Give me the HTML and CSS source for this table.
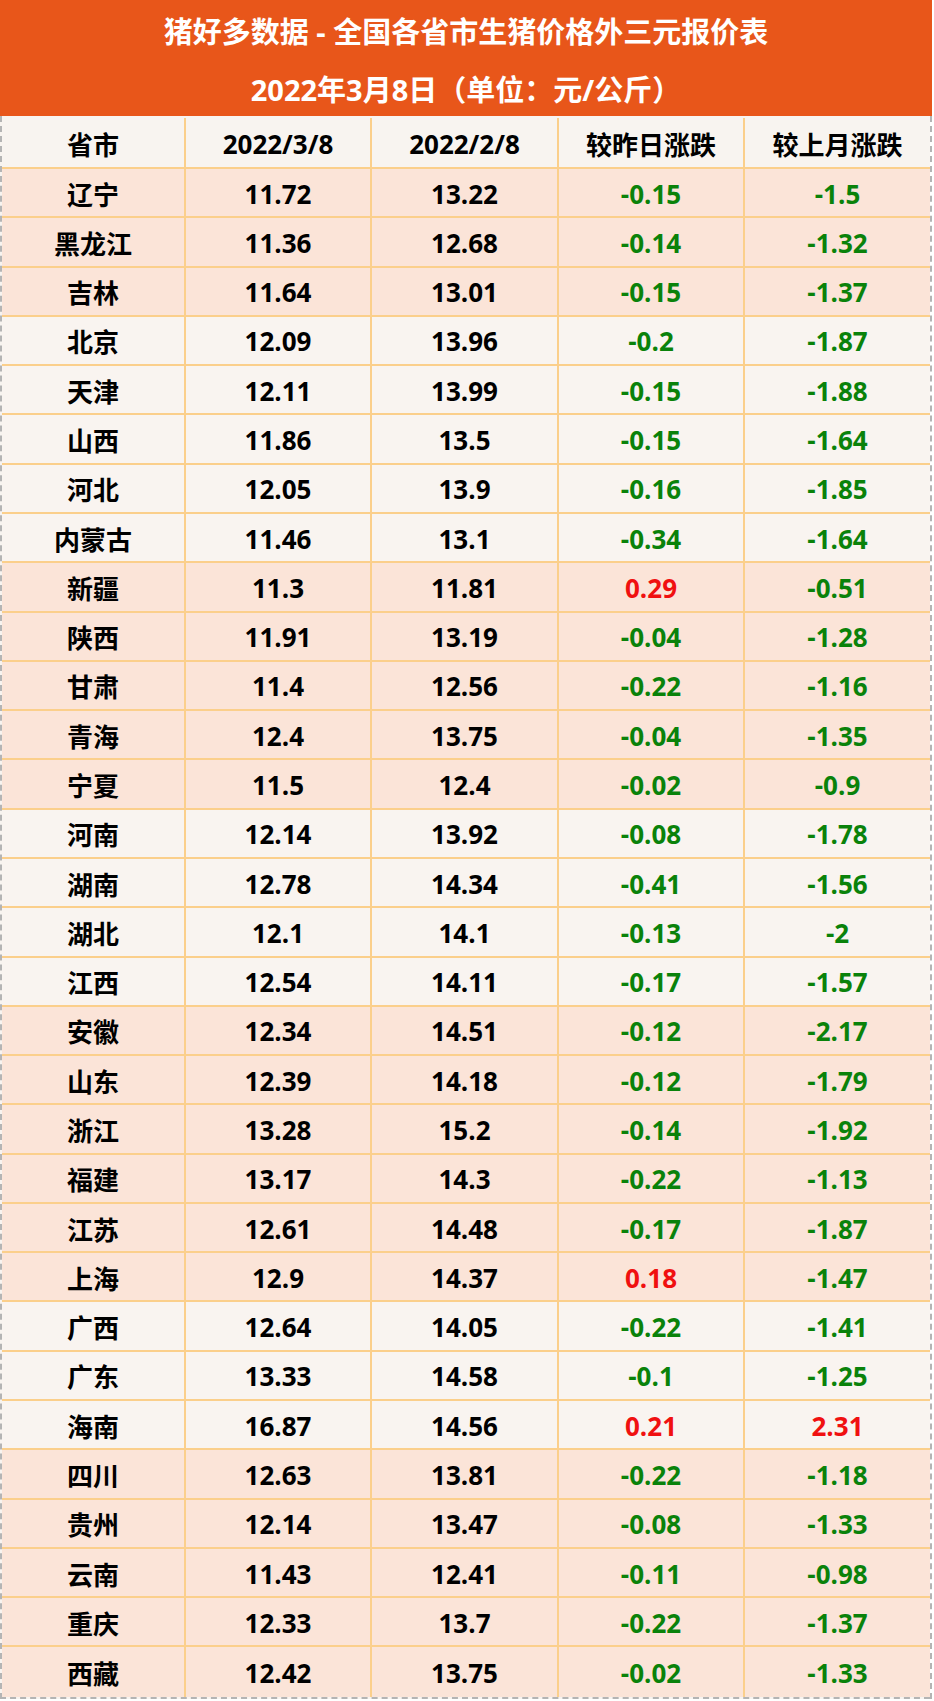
FILE: index.html
```html
<!DOCTYPE html>
<html lang="zh-CN">
<head>
<meta charset="utf-8">
<title>猪好多数据 - 全国各省市生猪价格外三元报价表</title>
<link rel="stylesheet" href="styles.css">
</head>
<body>
<div class="sheet">
  <div class="banner">
    <div class="banner-line first">猪好多数据 - 全国各省市生猪价格外三元报价表</div>
    <div class="banner-line">2022年3月8日（单位：元/公斤）</div>
  </div>
  <div class="grid">
    <div class="row head"><div class="cell">省市</div><div class="cell">2022/3/8</div><div class="cell">2022/2/8</div><div class="cell">较昨日涨跌</div><div class="cell">较上月涨跌</div></div>
    <div class="row pink"><div class="cell">辽宁</div><div class="cell">11.72</div><div class="cell">13.22</div><div class="cell down">-0.15</div><div class="cell down">-1.5</div></div>
    <div class="row pink"><div class="cell">黑龙江</div><div class="cell">11.36</div><div class="cell">12.68</div><div class="cell down">-0.14</div><div class="cell down">-1.32</div></div>
    <div class="row pink"><div class="cell">吉林</div><div class="cell">11.64</div><div class="cell">13.01</div><div class="cell down">-0.15</div><div class="cell down">-1.37</div></div>
    <div class="row light"><div class="cell">北京</div><div class="cell">12.09</div><div class="cell">13.96</div><div class="cell down">-0.2</div><div class="cell down">-1.87</div></div>
    <div class="row light"><div class="cell">天津</div><div class="cell">12.11</div><div class="cell">13.99</div><div class="cell down">-0.15</div><div class="cell down">-1.88</div></div>
    <div class="row light"><div class="cell">山西</div><div class="cell">11.86</div><div class="cell">13.5</div><div class="cell down">-0.15</div><div class="cell down">-1.64</div></div>
    <div class="row light"><div class="cell">河北</div><div class="cell">12.05</div><div class="cell">13.9</div><div class="cell down">-0.16</div><div class="cell down">-1.85</div></div>
    <div class="row light"><div class="cell">内蒙古</div><div class="cell">11.46</div><div class="cell">13.1</div><div class="cell down">-0.34</div><div class="cell down">-1.64</div></div>
    <div class="row pink"><div class="cell">新疆</div><div class="cell">11.3</div><div class="cell">11.81</div><div class="cell up">0.29</div><div class="cell down">-0.51</div></div>
    <div class="row pink"><div class="cell">陕西</div><div class="cell">11.91</div><div class="cell">13.19</div><div class="cell down">-0.04</div><div class="cell down">-1.28</div></div>
    <div class="row pink"><div class="cell">甘肃</div><div class="cell">11.4</div><div class="cell">12.56</div><div class="cell down">-0.22</div><div class="cell down">-1.16</div></div>
    <div class="row pink"><div class="cell">青海</div><div class="cell">12.4</div><div class="cell">13.75</div><div class="cell down">-0.04</div><div class="cell down">-1.35</div></div>
    <div class="row pink"><div class="cell">宁夏</div><div class="cell">11.5</div><div class="cell">12.4</div><div class="cell down">-0.02</div><div class="cell down">-0.9</div></div>
    <div class="row light"><div class="cell">河南</div><div class="cell">12.14</div><div class="cell">13.92</div><div class="cell down">-0.08</div><div class="cell down">-1.78</div></div>
    <div class="row light"><div class="cell">湖南</div><div class="cell">12.78</div><div class="cell">14.34</div><div class="cell down">-0.41</div><div class="cell down">-1.56</div></div>
    <div class="row light"><div class="cell">湖北</div><div class="cell">12.1</div><div class="cell">14.1</div><div class="cell down">-0.13</div><div class="cell down">-2</div></div>
    <div class="row light"><div class="cell">江西</div><div class="cell">12.54</div><div class="cell">14.11</div><div class="cell down">-0.17</div><div class="cell down">-1.57</div></div>
    <div class="row pink"><div class="cell">安徽</div><div class="cell">12.34</div><div class="cell">14.51</div><div class="cell down">-0.12</div><div class="cell down">-2.17</div></div>
    <div class="row pink"><div class="cell">山东</div><div class="cell">12.39</div><div class="cell">14.18</div><div class="cell down">-0.12</div><div class="cell down">-1.79</div></div>
    <div class="row pink"><div class="cell">浙江</div><div class="cell">13.28</div><div class="cell">15.2</div><div class="cell down">-0.14</div><div class="cell down">-1.92</div></div>
    <div class="row pink"><div class="cell">福建</div><div class="cell">13.17</div><div class="cell">14.3</div><div class="cell down">-0.22</div><div class="cell down">-1.13</div></div>
    <div class="row pink"><div class="cell">江苏</div><div class="cell">12.61</div><div class="cell">14.48</div><div class="cell down">-0.17</div><div class="cell down">-1.87</div></div>
    <div class="row pink"><div class="cell">上海</div><div class="cell">12.9</div><div class="cell">14.37</div><div class="cell up">0.18</div><div class="cell down">-1.47</div></div>
    <div class="row light"><div class="cell">广西</div><div class="cell">12.64</div><div class="cell">14.05</div><div class="cell down">-0.22</div><div class="cell down">-1.41</div></div>
    <div class="row light"><div class="cell">广东</div><div class="cell">13.33</div><div class="cell">14.58</div><div class="cell down">-0.1</div><div class="cell down">-1.25</div></div>
    <div class="row light"><div class="cell">海南</div><div class="cell">16.87</div><div class="cell">14.56</div><div class="cell up">0.21</div><div class="cell up">2.31</div></div>
    <div class="row pink"><div class="cell">四川</div><div class="cell">12.63</div><div class="cell">13.81</div><div class="cell down">-0.22</div><div class="cell down">-1.18</div></div>
    <div class="row pink"><div class="cell">贵州</div><div class="cell">12.14</div><div class="cell">13.47</div><div class="cell down">-0.08</div><div class="cell down">-1.33</div></div>
    <div class="row pink"><div class="cell">云南</div><div class="cell">11.43</div><div class="cell">12.41</div><div class="cell down">-0.11</div><div class="cell down">-0.98</div></div>
    <div class="row pink"><div class="cell">重庆</div><div class="cell">12.33</div><div class="cell">13.7</div><div class="cell down">-0.22</div><div class="cell down">-1.37</div></div>
    <div class="row pink last"><div class="cell">西藏</div><div class="cell">12.42</div><div class="cell">13.75</div><div class="cell down">-0.02</div><div class="cell down">-1.33</div></div>
  </div>
</div>
</body>
</html>
```

FILE: styles.css
```css
html, body {
  margin: 0;
  padding: 0;
  background: #ffffff;
}

.sheet {
  width: 932px;
  font-family: "Open Sans", "Noto Sans CJK SC", sans-serif;
  font-weight: 700;
  color: #000000;
}

.banner {
  background: #e8561a;
  height: 116px;
  padding-top: 2px;
  box-sizing: border-box;
  color: #ffffff;
  text-align: center;
}

.banner-line {
  font-size: 29px;
  line-height: 56px;
  height: 56px;
}

.banner-line.first {
  line-height: 60px;
  height: 60px;
}

.grid {
  width: 930px;
  border-left: 2px dashed #b4b4b4;
  border-bottom: 2px dashed #b4b4b4;
  box-sizing: border-box;
  position: relative;
  padding-top: 2px;
  background: #f8f4f0;
}

.grid::after {
  content: "";
  position: absolute;
  top: 0;
  bottom: -2px;
  right: -2px;
  border-right: 2px dashed #b4b4b4;
}

.row {
  display: grid;
  grid-template-columns: 184px 186px 187px 186px 185px;
  height: 49.29px;
  box-sizing: border-box;
  border-bottom: 2px solid #fbcf8b;
}

.row.head {
  height: 51px;
  background: #f8f4f0;
}

.row.last {
  border-bottom: 0;
}

.row.pink {
  background: #fbe4d8;
}

.row.light {
  background: #f9f4f0;
}

.cell {
  display: flex;
  align-items: center;
  justify-content: center;
  font-size: 26px;
  border-right: 2px solid #fbcf8b;
  padding-top: 2px;
}

.cell:last-child {
  border-right: 0;
}

.down {
  color: #0a820a;
}

.up {
  color: #f01010;
}
```
